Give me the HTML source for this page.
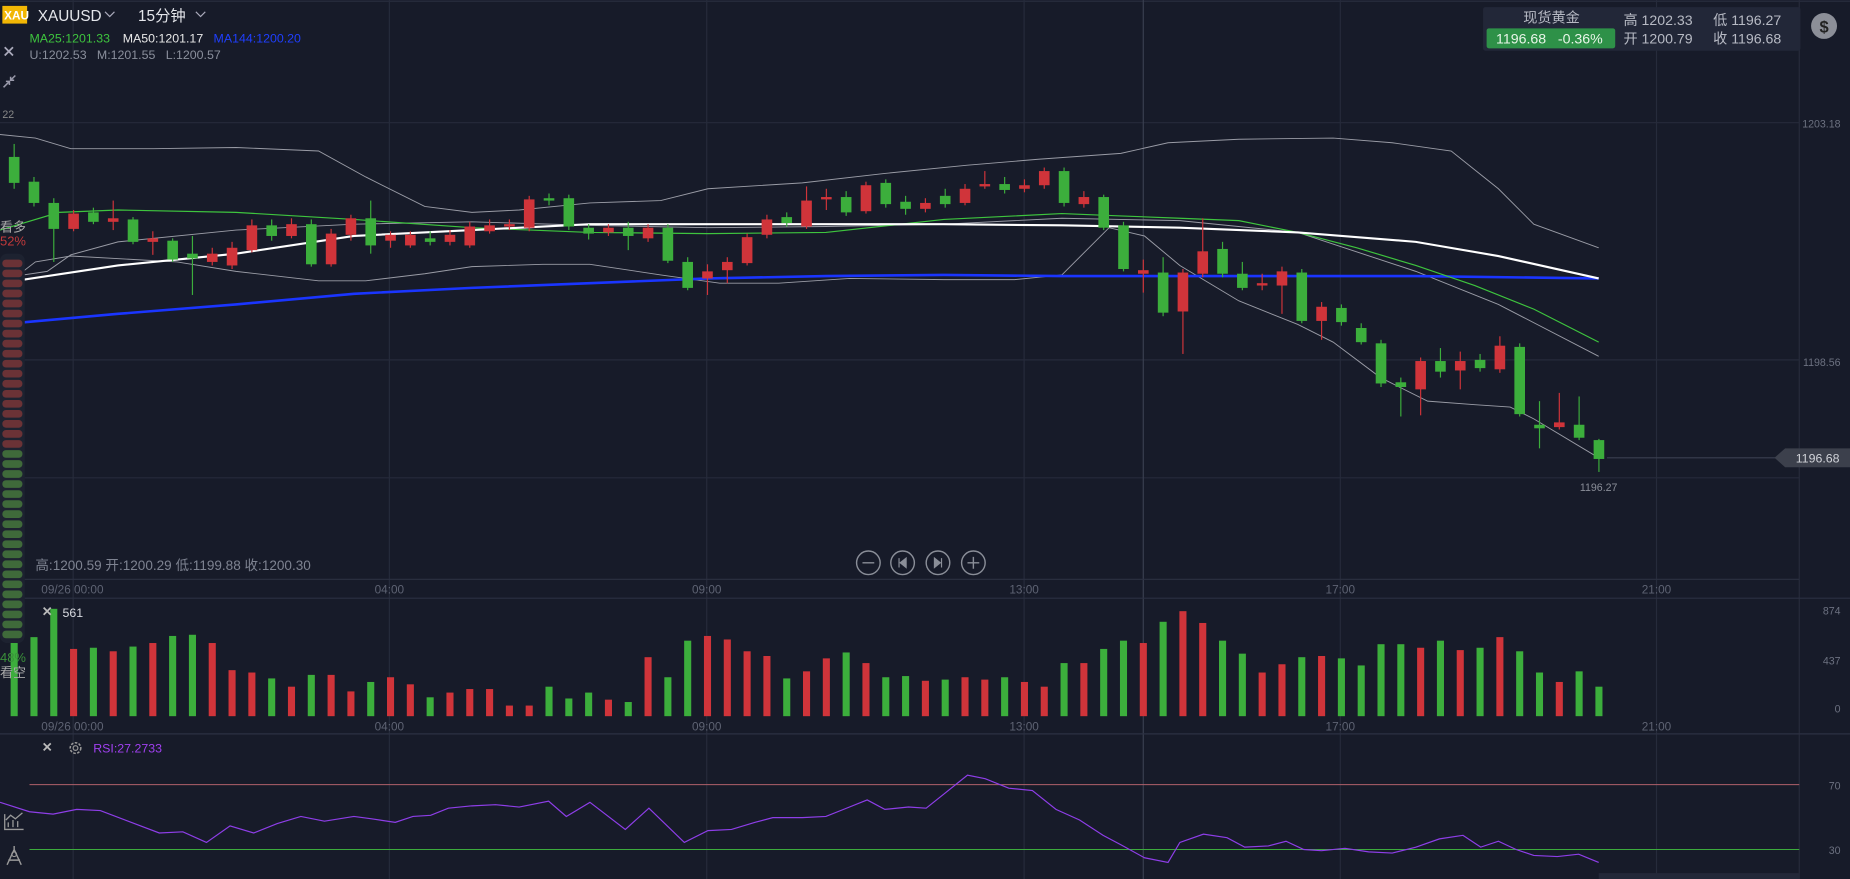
<!DOCTYPE html>
<html><head><meta charset="utf-8">
<style>
html,body{margin:0;padding:0;background:#171b29;overflow:hidden}
svg{display:block}
text{font-family:"Liberation Sans","Noto Sans CJK SC",sans-serif}
</style></head>
<body>
<svg id="s" width="1850" height="879" viewBox="0 0 1568 745" preserveAspectRatio="none" xmlns="http://www.w3.org/2000/svg">
<rect width="1568" height="745" fill="#171b29"/>
<line x1="0" y1="1" x2="1568" y2="1" stroke="#2a2f40"/>
<g id="grid" stroke="#262b3b" stroke-width="1"></g>
<line x1="969" y1="0" x2="969" y2="745" stroke="#3a3f50"/>
<line x1="0" y1="491" x2="1525" y2="491" stroke="#2c3142"/>
<line x1="0" y1="507" x2="1568" y2="507" stroke="#2c3142"/>
<line x1="0" y1="622" x2="1568" y2="622" stroke="#2c3142"/>
<line x1="25" y1="665" x2="1525" y2="665" stroke="#b0606a" stroke-width="0.8"/>
<line x1="25" y1="720" x2="1525" y2="720" stroke="#3cab3c" stroke-width="0.8"/>
<g id="c"></g>
<!-- header -->
<rect x="2" y="5" width="21" height="15" fill="#f2b705"/>
<text x="3.5" y="16.5" font-size="10" font-weight="bold" fill="#fff">XAU</text>
<text x="32" y="18" font-size="13" fill="#e4e6eb">XAUUSD</text>
<path d="M89 10 l4 4 l4 -4" stroke="#aab" fill="none"/>
<text x="117" y="18" font-size="13" fill="#e4e6eb">15分钟</text>
<path d="M166 10 l4 4 l4 -4" stroke="#aab" fill="none"/>
<text x="25" y="36" font-size="10.5" fill="#3ec43e">MA25:1201.33</text>
<text x="104" y="36" font-size="10.5" fill="#e8e8e8">MA50:1201.17</text>
<text x="181" y="36" font-size="10.5" fill="#1f3fff">MA144:1200.20</text>
<text x="25" y="50" font-size="10.5" fill="#8a8f9c">U:1202.53 &#160; M:1201.55 &#160; L:1200.57</text>
<path d="M4 40 l7 7 M11 40 l-7 7" stroke="#aab" stroke-width="1.5"/>
<path d="M3 74 l5 -5 M8 72 v-3 h-3 M13 64 l-4 4 M9 65 v3 h3" stroke="#99a" stroke-width="1.3" fill="none"/>
<text x="2" y="100" font-size="9" fill="#888">22</text>
<!-- price panel -->
<rect x="1257" y="6" width="269" height="37" rx="2" fill="#222738"/>
<text x="1315" y="19" text-anchor="middle" font-size="12" fill="#b7bac4">现货黄金</text>
<rect x="1260" y="24" width="109" height="17" rx="2" fill="#2e9148"/>
<text x="1268" y="37" font-size="12" fill="#e8f5e8">1196.68 &#160; -0.36%</text>
<text x="1376" y="21" font-size="12" fill="#b7bac4">高 1202.33</text>
<text x="1452" y="21" font-size="12" fill="#b7bac4">低 1196.27</text>
<text x="1376" y="37" font-size="12" fill="#b7bac4">开 1200.79</text>
<text x="1452" y="37" font-size="12" fill="#b7bac4">收 1196.68</text>
<circle cx="1546" cy="22" r="11" fill="#8c8f98"/>
<text x="1546" y="27.5" text-anchor="middle" font-size="14" font-weight="bold" fill="#222">$</text>
<!-- axis labels -->
<g font-size="9" fill="#6c7180">
<text x="1560" y="108" text-anchor="end">1203.18</text>
<text x="1560" y="310" text-anchor="end">1198.56</text>
<text x="1560" y="521" text-anchor="end">874</text>
<text x="1560" y="563" text-anchor="end">437</text>
<text x="1560" y="604" text-anchor="end">0</text>
<text x="1560" y="669" text-anchor="end">70</text>
<text x="1560" y="724" text-anchor="end">30</text>
</g>
<g font-size="10" fill="#5e6373">
<text x="35" y="503">09/26 00:00</text><text x="330" y="503" text-anchor="middle">04:00</text><text x="599" y="503" text-anchor="middle">09:00</text><text x="868" y="503" text-anchor="middle">13:00</text><text x="1136" y="503" text-anchor="middle">17:00</text><text x="1404" y="503" text-anchor="middle">21:00</text>
<text x="35" y="619">09/26 00:00</text><text x="330" y="619" text-anchor="middle">04:00</text><text x="599" y="619" text-anchor="middle">09:00</text><text x="868" y="619" text-anchor="middle">13:00</text><text x="1136" y="619" text-anchor="middle">17:00</text><text x="1404" y="619" text-anchor="middle">21:00</text>
</g>
<line x1="1362" y1="388" x2="1512" y2="388" stroke="#3a3f50"/>
<path d="M1504 388 l9 -8 h55 v16 h-55 z" fill="#3c404c"/>
<text x="1522" y="392" font-size="10.5" fill="#d0d2d8">1196.68</text>
<text x="1355" y="416" text-anchor="middle" font-size="9" fill="#8a8e98">1196.27</text>
<text x="30" y="483" font-size="11.5" fill="#7e8391">高:1200.59 开:1200.29 低:1199.88 收:1200.30</text>
<g stroke="#8a8e98" fill="none" stroke-width="1.2">
<circle cx="736" cy="477" r="10"/><circle cx="765" cy="477" r="10"/><circle cx="795" cy="477" r="10"/><circle cx="825" cy="477" r="10"/>
<path d="M731 477 h10 M820 477 h10 M825 472 v10"/>
</g>
<path d="M762 473 v8 M768 473 l-5 4 l5 4 z M798 473 v8 M792 473 l5 4 l-5 4 z" fill="#8a8e98" stroke="#8a8e98"/>
<path d="M37 515 l6 6 M43 515 l-6 6" stroke="#bbb" stroke-width="1.5"/>
<text x="53" y="523" font-size="10.5" fill="#d8dae0">561</text>
<path d="M37 630 l6 6 M43 630 l-6 6" stroke="#bbb" stroke-width="1.5"/>
<circle cx="64" cy="634" r="4.5" stroke="#999" fill="none" stroke-width="1.3" stroke-dasharray="2.2 1.2"/><circle cx="64" cy="634" r="2" stroke="#999" fill="none"/>
<text x="79" y="638" font-size="10.5" fill="#a040f0">RSI:27.2733</text>
<path d="M4 690 v13 h16 M7 701 v-4 M11 701 v-6 M15 701 v-5 M5 695 l4 -4 l4 3 l6 -5" stroke="#999" fill="none" stroke-width="1.1"/>
<path d="M12 720 l-6 13 M12 720 l6 13 M7 729 h10 M12 717 v3" stroke="#999" fill="none" stroke-width="1.2"/><circle cx="12" cy="724" r="2" stroke="#999" fill="none"/>
<rect x="1355" y="740" width="170" height="5" fill="#232838"/>
<!-- sentiment -->
<rect x="0" y="215" width="21" height="330" rx="6" fill="#1d2230"/>
<g id="pills"></g>
<text x="0" y="196" font-size="11" fill="#aaa">看多</text>
<text x="0" y="208" font-size="11" fill="#c0393b">52%</text>
<text x="0" y="561" font-size="11" fill="#3a8f3a">48%</text>
<text x="0" y="574" font-size="11" fill="#aaa">看空</text>
</svg>
<script>
var NS="http://www.w3.org/2000/svg",c=document.getElementById('c');
function el(t,a,p){var e=document.createElementNS(NS,t);for(var k in a)e.setAttribute(k,a[k]);(p||c).appendChild(e);return e;}
var g=document.getElementById('grid');
[62,330,599,868,1136,1404].forEach(function(x){el('line',{x1:x,y1:0,x2:x,y2:745},g)});
[104,305,405].forEach(function(y){el('line',{x1:0,y1:y,x2:1525,y2:y},g)});
el('line',{x1:1525,y1:0,x2:1525,y2:745},g);
var P=document.getElementById('pills');
for(var i=0;i<38;i++){el('rect',{x:2,y:220+i*8.5,width:17,height:6.5,rx:3,fill:i<19?'#6b3236':'#3f6a3a'},P);}
var C=[[133,155,'g',122,160],[154,172,'g',150,175],[172,194,'g',168,222],[181,194,'r',178,196],[180,188,'g',176,190],[185,188,'r',170,195],[186,205,'g',184,207],[202,205,'r',196,216],[204,220,'g',202,222],[215,219,'g',200,250],[215,222,'r',210,225],[210,225,'r',205,228],[191,212,'r',186,214],[191,200,'g',186,204],[190,200,'r',185,202],[190,224,'g',186,226],[198,224,'r',194,226],[185,199,'r',182,204],[185,208,'g',170,215],[199,204,'r',196,210],[199,208,'r',196,210],[202,205,'g',196,208],[199,205,'r',195,208],[192,208,'r',188,210],[191,196,'r',186,198],[190,192,'r',186,195],[169,193,'r',166,196],[168,170,'g',164,174],[168,192,'g',165,195],[193,198,'g',190,203],[193,197,'r',190,200],[193,200,'g',188,212],[193,202,'r',190,205],[193,221,'g',190,223],[222,244,'g',218,246],[230,236,'r',224,250],[222,229,'r',218,240],[201,223,'r',198,225],[186,199,'r',182,202],[184,189,'g',180,192],[170,192,'r',158,194],[167,169,'r',160,178],[167,180,'g',162,183],[157,179,'r',154,181],[155,173,'g',152,176],[171,177,'g',166,182],[172,177,'r',168,180],[166,173,'g',160,176],[160,172,'r',156,174],[156,158,'r',145,160],[156,161,'g',150,164],[157,160,'r',152,163],[145,157,'r',142,160],[145,172,'g',142,175],[167,173,'r',162,176],[167,193,'g',165,195],[191,228,'g',188,230],[229,232,'r',220,248],[231,265,'g',218,268],[231,264,'r',228,300],[213,232,'r',185,235],[211,232,'g',205,235],[232,244,'g',222,246],[240,242,'r',232,246],[230,242,'r',226,266],[231,272,'g',228,274],[260,272,'r',256,288],[261,273,'g',258,276],[278,290,'g',274,292],[291,325,'g',288,328],[324,328,'g',320,353],[306,330,'r',303,352],[306,315,'g',295,320],[306,314,'r',298,330],[305,312,'g',300,315],[293,313,'r',285,316],[294,351,'g',291,353],[360,363,'g',340,380],[358,362,'r',333,364],[360,371,'g',336,373],[373,389,'g',372,400]];
var V=[525,540,516,550,549,552,548,545,539,538,545,568,570,575,582,572,572,586,578,574,580,591,587,584,584,598,598,582,592,587,593,595,557,574,543,539,542,552,556,575,569,558,553,562,574,573,577,576,574,576,574,578,582,562,562,550,543,545,527,518,528,543,554,570,563,557,556,558,564,546,546,549,543,551,549,540,552,570,578,569,582];
function pl(pts,col,w){el('polyline',{points:pts.map(function(p){return p.join(',')}).join(' '),fill:'none',stroke:col,'stroke-width':w});}
pl([[0,114],[30,117],[60,126],[130,126],[200,125],[270,128],[310,150],[360,175],[400,180],[440,178],[500,172],[560,170],[600,160],[680,155],[750,147],[820,140],[880,135],[950,130],[990,121],[1050,118],[1130,117],[1180,121],[1230,128],[1270,160],[1300,190],[1355,210]],'#9a9ca6',0.8);
pl([[0,245],[30,222],[60,217],[150,222],[200,230],[270,238],[310,238],[360,232],[400,226],[460,224],[500,224],[560,233],[610,240],[660,240],[720,236],[800,237],[860,237],[900,233],[940,193],[970,200],[1000,225],[1050,255],[1100,275],[1130,290],[1170,320],[1210,340],[1250,343],[1280,345],[1300,355],[1355,388]],'#9a9ca6',0.8);
pl([[0,236],[40,230],[60,216],[100,205],[200,195],[300,190],[400,188],[500,191],[600,193],[700,192],[800,190],[900,185],[1000,187],[1100,197],[1200,230],[1270,258],[1355,302]],'#9a9ca6',0.8);
pl([[0,275],[100,266],[200,258],[300,249],[400,244],[500,240],[600,236],[700,234],[800,233],[900,234],[1000,234],[1100,234],[1200,234],[1355,236]],'#1a35ff',2.2);
pl([[0,195],[50,180],[100,178],[200,180],[300,186],[400,193],[450,195],[500,197],[600,198],[700,197],[800,186],[900,181],[950,183],[1000,185],[1050,187],[1100,197],[1150,210],[1200,225],[1250,242],[1300,262],[1355,290]],'#3ec43e',1);
pl([[0,240],[100,225],[200,215],[300,200],[400,195],[500,190],[600,190],[700,190],[800,190],[900,191],[1000,193],[1100,197],[1200,205],[1270,217],[1355,236]],'#ffffff',1.8);
C.forEach(function(d,i){var x=12+i*16.79,col=d[2]=='g'?'#3cae3c':'#d0343a';
el('line',{x1:x,y1:d[3],x2:x,y2:d[4],stroke:col,'stroke-width':1});
el('rect',{x:x-4.5,y:d[0],width:9,height:Math.max(2,d[1]-d[0]),fill:col});
el('rect',{x:x-3,y:V[i],width:6,height:607-V[i],fill:col});});
pl([[0,680],[25,688],[45,690],[65,686],[85,687],[135,706],[155,705],[175,714],[195,700],[215,706],[235,698],[255,692],[275,696],[300,692],[315,694],[335,697],[350,692],[365,691],[380,685],[400,683],[420,682],[440,684],[465,679],[480,692],[500,680],[530,703],[550,685],[580,714],[600,704],[620,703],[640,697],[655,693],[680,693],[700,692],[715,686],[735,678],[750,686],[770,684],[785,685],[800,673],[820,657],[835,660],[855,668],[875,670],[895,686],[915,695],[935,708],[950,716],[970,727],[990,731],[1000,714],[1020,707],[1040,710],[1055,718],[1075,717],[1090,713],[1105,720],[1120,721],[1140,719],[1160,722],[1180,723],[1200,718],[1220,711],[1240,708],[1255,718],[1270,713],[1285,720],[1300,725],[1320,726],[1338,724],[1355,731]],'#8e3ee8',1);
</script>
</body></html>
